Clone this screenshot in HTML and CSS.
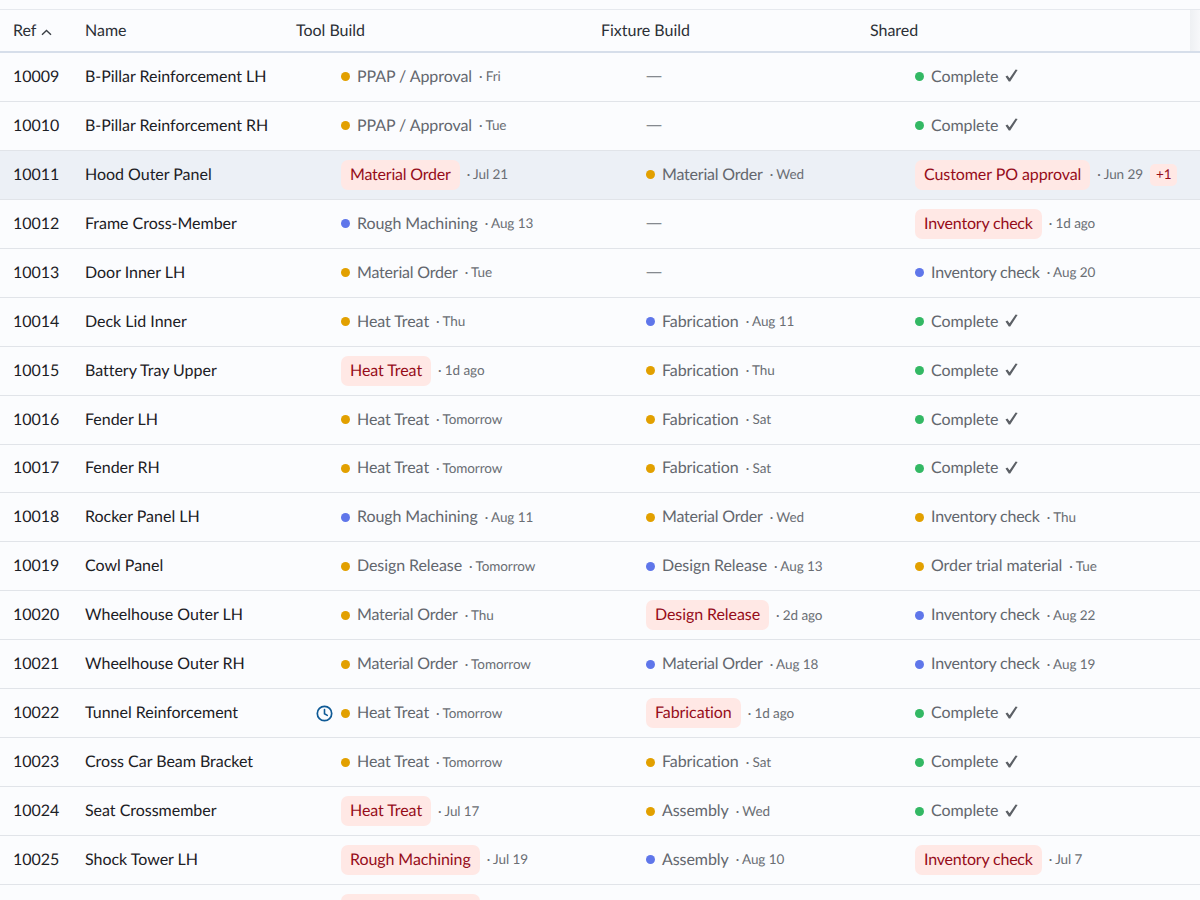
FILE: index.html
```html
<!DOCTYPE html>
<html lang="en">
<head>
<meta charset="utf-8">
<title>Parts</title>
<link rel="stylesheet" href="styles.css">
</head>
<body>
<svg class="defs" width="0" height="0"><symbol id="tick" viewBox="0 0 13 13"><path d="M0.5 7.6L2.4 6.4L4.6 9.2L10.6 0.4L12.6 1L5.2 12.4L3.8 12.4Z"/></symbol></svg>
<div class="table">
<div class="row head"><div class="t">Ref <svg class="sort" width="11" height="7" viewBox="0 0 11 7"><path d="M1 5.8l4.5-4.3 4.5 4.3" fill="none" stroke="#3a3f45" stroke-width="1.4"/></svg></div><div class="t">Name</div><div class="t">Tool Build</div><div class="t">Fixture Build</div><div class="t">Shared</div><span class="edge"></span></div>
<div class="row"><div class="t">10009</div><div class="t">B-Pillar Reinforcement LH</div><div class="cell"><i class="dot a"></i><span class="st">PPAP / Approval</span><span class="dt">· Fri</span></div><div class="cell"><span class="none">—</span></div><div class="cell"><i class="dot g"></i><span class="st">Complete</span><svg class="ck"><use href="#tick"/></svg></div></div>
<div class="row"><div class="t">10010</div><div class="t">B-Pillar Reinforcement RH</div><div class="cell"><i class="dot a"></i><span class="st">PPAP / Approval</span><span class="dt">· Tue</span></div><div class="cell"><span class="none">—</span></div><div class="cell"><i class="dot g"></i><span class="st">Complete</span><svg class="ck"><use href="#tick"/></svg></div></div>
<div class="row hl"><div class="t">10011</div><div class="t">Hood Outer Panel</div><div class="cell"><span class="chip tight">Material Order</span><span class="dt">· Jul 21</span></div><div class="cell"><i class="dot a"></i><span class="st tight">Material Order</span><span class="dt">· Wed</span></div><div class="cell"><span class="chip">Customer PO approval</span><span class="dt">· Jun 29</span><span class="more">+1</span></div></div>
<div class="row"><div class="t">10012</div><div class="t">Frame Cross-Member</div><div class="cell"><i class="dot b"></i><span class="st">Rough Machining</span><span class="dt">· Aug 13</span></div><div class="cell"><span class="none">—</span></div><div class="cell"><span class="chip tight">Inventory check</span><span class="dt">· 1d ago</span></div></div>
<div class="row"><div class="t">10013</div><div class="t">Door Inner LH</div><div class="cell"><i class="dot a"></i><span class="st tight">Material Order</span><span class="dt">· Tue</span></div><div class="cell"><span class="none">—</span></div><div class="cell"><i class="dot b"></i><span class="st tight">Inventory check</span><span class="dt">· Aug 20</span></div></div>
<div class="row"><div class="t">10014</div><div class="t">Deck Lid Inner</div><div class="cell"><i class="dot a"></i><span class="st">Heat Treat</span><span class="dt">· Thu</span></div><div class="cell"><i class="dot b"></i><span class="st">Fabrication</span><span class="dt">· Aug 11</span></div><div class="cell"><i class="dot g"></i><span class="st">Complete</span><svg class="ck"><use href="#tick"/></svg></div></div>
<div class="row"><div class="t">10015</div><div class="t">Battery Tray Upper</div><div class="cell"><span class="chip">Heat Treat</span><span class="dt">· 1d ago</span></div><div class="cell"><i class="dot a"></i><span class="st">Fabrication</span><span class="dt">· Thu</span></div><div class="cell"><i class="dot g"></i><span class="st">Complete</span><svg class="ck"><use href="#tick"/></svg></div></div>
<div class="row"><div class="t">10016</div><div class="t">Fender LH</div><div class="cell"><i class="dot a"></i><span class="st">Heat Treat</span><span class="dt">· Tomorrow</span></div><div class="cell"><i class="dot a"></i><span class="st">Fabrication</span><span class="dt">· Sat</span></div><div class="cell"><i class="dot g"></i><span class="st">Complete</span><svg class="ck"><use href="#tick"/></svg></div></div>
<div class="row"><div class="t">10017</div><div class="t">Fender RH</div><div class="cell"><i class="dot a"></i><span class="st">Heat Treat</span><span class="dt">· Tomorrow</span></div><div class="cell"><i class="dot a"></i><span class="st">Fabrication</span><span class="dt">· Sat</span></div><div class="cell"><i class="dot g"></i><span class="st">Complete</span><svg class="ck"><use href="#tick"/></svg></div></div>
<div class="row"><div class="t">10018</div><div class="t">Rocker Panel LH</div><div class="cell"><i class="dot b"></i><span class="st">Rough Machining</span><span class="dt">· Aug 11</span></div><div class="cell"><i class="dot a"></i><span class="st tight">Material Order</span><span class="dt">· Wed</span></div><div class="cell"><i class="dot a"></i><span class="st tight">Inventory check</span><span class="dt">· Thu</span></div></div>
<div class="row"><div class="t">10019</div><div class="t">Cowl Panel</div><div class="cell"><i class="dot a"></i><span class="st">Design Release</span><span class="dt">· Tomorrow</span></div><div class="cell"><i class="dot b"></i><span class="st">Design Release</span><span class="dt">· Aug 13</span></div><div class="cell"><i class="dot a"></i><span class="st">Order trial material</span><span class="dt">· Tue</span></div></div>
<div class="row"><div class="t">10020</div><div class="t">Wheelhouse Outer LH</div><div class="cell"><i class="dot a"></i><span class="st tight">Material Order</span><span class="dt">· Thu</span></div><div class="cell"><span class="chip">Design Release</span><span class="dt">· 2d ago</span></div><div class="cell"><i class="dot b"></i><span class="st tight">Inventory check</span><span class="dt">· Aug 22</span></div></div>
<div class="row"><div class="t">10021</div><div class="t">Wheelhouse Outer RH</div><div class="cell"><i class="dot a"></i><span class="st tight">Material Order</span><span class="dt">· Tomorrow</span></div><div class="cell"><i class="dot b"></i><span class="st tight">Material Order</span><span class="dt">· Aug 18</span></div><div class="cell"><i class="dot b"></i><span class="st tight">Inventory check</span><span class="dt">· Aug 19</span></div></div>
<div class="row"><div class="t">10022</div><div class="t name-wrap">Tunnel Reinforcement<svg class="clock" width="17" height="17" viewBox="0 0 17 17"><circle cx="8.5" cy="8.5" r="7.2" fill="none" stroke="#0f5a96" stroke-width="1.7"/><path d="M8.5 4.5v4.3l2.8 1.6" fill="none" stroke="#0f5a96" stroke-width="1.6" stroke-linecap="round"/></svg></div><div class="cell"><i class="dot a"></i><span class="st">Heat Treat</span><span class="dt">· Tomorrow</span></div><div class="cell"><span class="chip">Fabrication</span><span class="dt">· 1d ago</span></div><div class="cell"><i class="dot g"></i><span class="st">Complete</span><svg class="ck"><use href="#tick"/></svg></div></div>
<div class="row"><div class="t">10023</div><div class="t">Cross Car Beam Bracket</div><div class="cell"><i class="dot a"></i><span class="st">Heat Treat</span><span class="dt">· Tomorrow</span></div><div class="cell"><i class="dot a"></i><span class="st">Fabrication</span><span class="dt">· Sat</span></div><div class="cell"><i class="dot g"></i><span class="st">Complete</span><svg class="ck"><use href="#tick"/></svg></div></div>
<div class="row"><div class="t">10024</div><div class="t">Seat Crossmember</div><div class="cell"><span class="chip">Heat Treat</span><span class="dt">· Jul 17</span></div><div class="cell"><i class="dot a"></i><span class="st">Assembly</span><span class="dt">· Wed</span></div><div class="cell"><i class="dot g"></i><span class="st">Complete</span><svg class="ck"><use href="#tick"/></svg></div></div>
<div class="row"><div class="t">10025</div><div class="t">Shock Tower LH</div><div class="cell"><span class="chip">Rough Machining</span><span class="dt">· Jul 19</span></div><div class="cell"><i class="dot b"></i><span class="st">Assembly</span><span class="dt">· Aug 10</span></div><div class="cell"><span class="chip tight">Inventory check</span><span class="dt">· Jul 7</span></div></div>
<div class="row"><div></div><div></div><div class="cell"><span class="chip">Rough Machining</span></div><div class="cell"></div><div class="cell"></div></div>
</div>
</body>
</html>
```
FILE: styles.css
```css
html, body { margin: 0; height: 900px; overflow: hidden; background: #fbfcfe; }
body { padding-top: 9px; box-sizing: border-box; font-family: Lato, "Noto Sans", sans-serif; font-size: 16px; letter-spacing: -0.08px; color: #1c2025; text-rendering: geometricPrecision; }
.defs { position: absolute; }
.table { border-top: 1px solid #e6e9ee; }
.row { position: relative; display: grid; grid-template-columns: 72px 211px 305px 269px 1fr; height: 48.94px; box-sizing: border-box; align-items: center; border-bottom: 1px solid #e1e4e9; }
.row > div { padding-left: 13px; white-space: nowrap; }
.row > .t { padding-bottom: 1px; letter-spacing: -0.02px; }
.head { height: 43px; border-bottom: 2px solid #d6deea; color: #2c3036; }
.head > .t { padding-bottom: 0; }
.sort { margin-left: 1px; }
.edge { position: absolute; right: 0; top: 0; bottom: 0; width: 10px; background: linear-gradient(90deg, #eef0f3, #f7f8fa); }
.hl { background: #ecf0f6; }
.cell { display: flex; align-items: center; }
.row > .cell { padding-left: 58px; }
.dot { width: 9px; height: 9px; border-radius: 50%; margin-right: 7px; flex: none; }
.a { background: #e2a000; }
.b { background: #5f76ea; }
.g { background: #33b864; }
.st { color: #63676e; padding-bottom: 1px; }
.tight { letter-spacing: -0.2px; }
.dt { color: #6a6e74; font-size: 13.5px; margin-left: 7px; padding-bottom: 1px; }
.none { color: #85898f; font-family: "Noto Sans", sans-serif; padding-bottom: 3px; }
.ck { width: 13px; height: 13px; margin-left: 7px; margin-bottom: 2px; fill: #5c6066; }
.chip { display: block; padding: 0 9px 1px; height: 30px; box-sizing: border-box; line-height: 29px; border-radius: 7px; background: #ffe8e5; color: #960d1a; }
.more { margin-left: 7px; padding: 0 6px; height: 22px; line-height: 21px; border-radius: 5px; background: #ffe8e5; color: #960d1a; font-size: 13.5px; }
.name-wrap { position: relative; }
.clock { position: absolute; left: 244px; top: 50%; margin-top: -8px; }
```
